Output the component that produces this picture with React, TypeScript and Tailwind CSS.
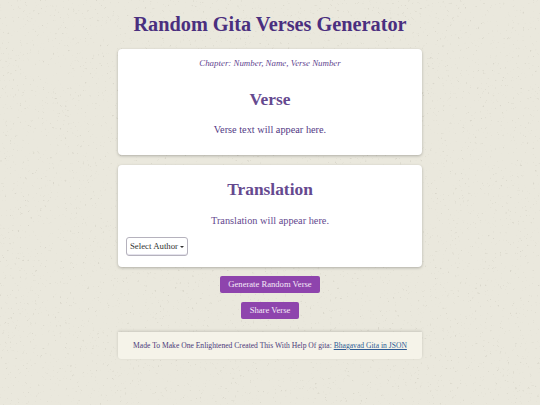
const serif = "font-['Liberation_Serif',serif]";

function PaperGrain() {
  return (
    <svg className="absolute inset-0 h-full w-full" aria-hidden="true">
      <filter id="grain" x="0" y="0" width="100%" height="100%">
        <feTurbulence type="fractalNoise" baseFrequency="0.4" numOctaves="3" seed="7" />
        <feColorMatrix values="0 0 0 0 0.55  0 0 0 0 0.53  0 0 0 0 0.45  6 0 0 0 -4.1" />
        <feGaussianBlur stdDeviation="0.5" />
      </filter>
      <rect width="100%" height="100%" filter="url(#grain)" opacity="0.4" />
    </svg>
  );
}

export default function App() {
  return (
    <div className={`relative min-h-[405px] overflow-hidden bg-[#eae8dd] ${serif}`}>
      <PaperGrain />
      <div className="relative mx-auto flex w-[304px] flex-col items-center">
        <h1 className="mt-[10px] whitespace-nowrap text-[20.3px] leading-[28px] font-bold text-[#4a2f7f]">
          Random Gita Verses Generator
        </h1>

        <section className="mt-[11px] h-[106px] w-full rounded-[4px] bg-white text-center shadow-[0_1px_3px_rgba(0,0,0,0.25)]">
          <p className="pt-[8px] text-[8.9px] leading-[12px] text-[#5f4590] italic">
            Chapter: Number, Name, Verse Number
          </p>
          <h2 className="mt-[18px] text-[17.4px] leading-[24px] font-bold text-[#65498f]">Verse</h2>
          <p className="mt-[12px] text-[10.3px] leading-[14px] text-[#533a85]">Verse text will appear here.</p>
        </section>

        <section className="mt-[10px] h-[102px] w-full rounded-[4px] bg-white text-center shadow-[0_1px_3px_rgba(0,0,0,0.25)]">
          <h2 className="pt-[12px] text-[17.4px] leading-[24px] font-bold text-[#65498f]">Translation</h2>
          <p className="mt-[13px] text-[10.3px] leading-[14px] text-[#65498f]">Translation will appear here.</p>
          <div className="mt-[9px] flex pl-[8px]">
            <button className="flex h-[19px] w-[62px] items-center justify-center gap-[2px] rounded-[3px] border border-[#b5b2bd] bg-white text-[8.8px] text-[#333] shadow-[inset_0_-1px_0_#e4e2ec]">
              Select Author
              <span className="mt-[1px] border-x-[2px] border-t-[2.5px] border-x-transparent border-t-[#333]" />
            </button>
          </div>
        </section>

        <button className="mt-[9px] h-[17px] w-[100px] rounded-[2px] bg-[#8e44ad] text-center text-[8.6px] leading-[17px] text-[#f5eaf8]">
          Generate Random Verse
        </button>
        <button className="mt-[9px] h-[17px] w-[58px] rounded-[2px] bg-[#8e44ad] text-center text-[8.6px] leading-[17px] text-[#f5eaf8]">
          Share Verse
        </button>

        <footer className="mt-[13px] h-[27px] w-full whitespace-nowrap rounded-b-[3px] bg-[#f5f3e9] text-center text-[7.6px] leading-[27px] text-[#4b3a7a] shadow-[0_-1px_3px_rgba(0,0,0,0.15)]">
          Made To Make One Enlightened Created This With Help Of gita:{' '}
          <a className="text-[#2f5c94] underline">Bhagavad Gita in JSON</a>
        </footer>
      </div>
    </div>
  );
}
